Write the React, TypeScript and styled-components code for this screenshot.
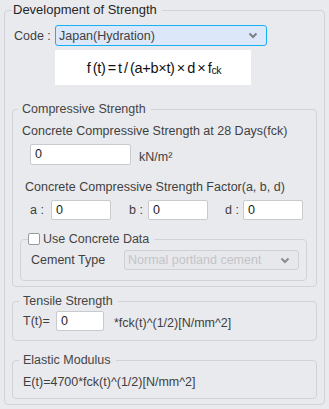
import React from "react";
import styled, { createGlobalStyle } from "styled-components";

const Global = createGlobalStyle`
  html, body { margin: 0; padding: 0; background: #e9eaee; }
  body { font-family: "Liberation Sans", Arial, sans-serif; font-size: 12px; color: #3d3d3d; }
  * { box-sizing: border-box; }
`;

const Page = styled.div`
  padding: 2px 0 0 4px;
  width: 329px;
  height: 409px;
  background: #e9eaee;
`;

const Group = styled.fieldset<{ $w?: string; $pb?: number; $mt?: number; $ml?: number; $mr?: number }>`
  margin: ${(p) => p.$mt ?? 0}px ${(p) => p.$mr ?? 0}px 0 ${(p) => p.$ml ?? 0}px;
  padding: 0 0 ${(p) => p.$pb ?? 0}px 0;
  border: 1px solid #d2d3d8;
  border-radius: 4px;
  min-width: 0;
  ${(p) => (p.$w ? `width: ${p.$w};` : "")}
`;

const OuterGroup = styled(Group)`
  padding-left: 7px;
  padding-right: 7px;
  height: 403px;
`;

const Legend = styled.legend<{ $ml?: number; $dark?: boolean; $pl?: number }>`
  margin-left: ${(p) => p.$ml ?? 0}px;
  padding: 0 5px 0 ${(p) => p.$pl ?? (p.$dark ? 1 : 4)}px;
  line-height: 16px;
  font-size: ${(p) => (p.$dark ? 13 : 12.5)}px;
  color: ${(p) => (p.$dark ? "#262626" : "#454545")};
  display: flex;
  align-items: center;
`;

const Row = styled.div<{ $mt?: number; $ml?: number }>`
  display: flex;
  align-items: center;
  margin-top: ${(p) => p.$mt ?? 0}px;
  margin-left: ${(p) => p.$ml ?? 0}px;
`;

const Label = styled.div<{ $w?: number; $ml?: number; $mt?: number }>`
  line-height: 16px;
  font-size: 12.5px;
  color: #3f3f3f;
  white-space: nowrap;
  ${(p) => (p.$w ? `width: ${p.$w}px; flex: none;` : "")}
  margin-left: ${(p) => p.$ml ?? 0}px;
  margin-top: ${(p) => p.$mt ?? 0}px;
`;

const Select = styled.div<{ $w: number; $h: number; $disabled?: boolean }>`
  width: ${(p) => p.$w}px;
  height: ${(p) => p.$h}px;
  flex: none;
  display: flex;
  align-items: center;
  justify-content: space-between;
  padding: 0 8px 0 3px;
  border-radius: 3px;
  font-size: 12.5px;
  background: ${(p) => (p.$disabled ? "#e7e8ec" : "#dce8f9")};
  border: 1px solid ${(p) => (p.$disabled ? "#cfd0d5" : "#17b1f3")};
  color: ${(p) => (p.$disabled ? "#c3c4c8" : "#3f3f3f")};
`;

const Chevron = styled.svg`
  width: 10px;
  height: 7px;
  flex: none;
`;

const FormulaBox = styled.div`
  margin: 4px 0 0 43px;
  width: 196px;
  height: 35px;
  background: #ffffff;
  display: flex;
  align-items: center;
  justify-content: center;
  padding-left: 2px;
  font-family: "Liberation Sans", Arial, sans-serif;
  font-size: 14.5px;
  color: #111;
  letter-spacing: -0.3px;
  word-spacing: -1.5px;
  white-space: nowrap;
`;

const Sub = styled.span`
  font-size: 10.5px;
  position: relative;
  top: 2px;
  letter-spacing: -0.3px;
`;

const Input = styled.div<{ $w: number; $h?: number }>`
  width: ${(p) => p.$w}px;
  height: ${(p) => p.$h ?? 21}px;
  flex: none;
  background: #fff;
  border: 1px solid #c9cacd;
  border-radius: 2px;
  padding: 1px 0 0 4px;
  font-size: 12.5px;
  line-height: 16px;
  color: #222;
`;

const Unit = styled.span<{ $ml?: number; $mt?: number }>`
  margin-left: ${(p) => p.$ml ?? 8}px;
  margin-top: ${(p) => p.$mt ?? 5}px;
  font-size: 12.5px;
  color: #3f3f3f;
`;

const CheckBox = styled.span`
  width: 12px;
  height: 12px;
  border: 1px solid #9a9a9e;
  border-radius: 2px;
  background: #fff;
  margin-right: 3px;
  flex: none;
`;

const ChevronIcon = ({ color }: { color: string }) => (
  <Chevron viewBox="0 0 10 7">
    <polyline points="1.5,1.5 5,5 8.5,1.5" fill="none" stroke={color} strokeWidth="2" />
  </Chevron>
);

export default function App() {
  return (
    <Page>
      <Global />
      <OuterGroup $w="321px" $pb={6}>
        <Legend $dark>Development of Strength</Legend>
        <Row $mt={7}>
          <Label $w={41} $ml={2}>Code :</Label>
          <Select $w={212} $h={21}>
            <span>Japan(Hydration)</span>
            <ChevronIcon color="#7d7f84" />
          </Select>
        </Row>
        <FormulaBox>
          f (t) = t / (a+b×t) × d × f<Sub>ck</Sub>
        </FormulaBox>

        <Group $mt={16} $pb={5}>
          <Legend $ml={5}>Compressive Strength</Legend>
          <Label $ml={9} $mt={6}>Concrete Compressive Strength at 28 Days(fck)</Label>
          <Row $mt={5} $ml={17}>
            <Input $w={101}>0</Input>
            <Unit>kN/m²</Unit>
          </Row>
          <Label $ml={12} $mt={14}>Concrete Compressive Strength Factor(a, b, d)</Label>
          <Row $mt={5} $ml={17}>
            <Label $w={21}>a :</Label>
            <Input $w={60} $h={20}>0</Input>
            <Label $w={19} $ml={18}>b :</Label>
            <Input $w={60} $h={20}>0</Input>
            <Label $w={18} $ml={17}>d :</Label>
            <Input $w={60} $h={20}>0</Input>
          </Row>
          <Group $mt={11} $ml={7} $mr={9} $pb={10}>
            <Legend $ml={7} $pl={0}>
              <CheckBox />
              Use Concrete Data
            </Legend>
            <Row $mt={3} $ml={10}>
              <Label $w={93}>Cement Type</Label>
              <Select $w={175} $h={20} $disabled>
                <span>Normal portland cement</span>
                <ChevronIcon color="#8a8b90" />
              </Select>
            </Row>
          </Group>
        </Group>

        <Group $mt={6} $pb={9}>
          <Legend $ml={6}>Tensile Strength</Legend>
          <Row $mt={2} $ml={10}>
            <Label $w={33}>T(t)=</Label>
            <Input $w={48} $h={20}>0</Input>
            <Unit $ml={10} $mt={4}>*fck(t)^(1/2)[N/mm^2]</Unit>
          </Row>
        </Group>

        <Group $mt={11} $pb={8}>
          <Legend $ml={6}>Elastic Modulus</Legend>
          <Label $ml={10} $mt={6}>E(t)=4700*fck(t)^(1/2)[N/mm^2]</Label>
        </Group>
      </OuterGroup>
    </Page>
  );
}
